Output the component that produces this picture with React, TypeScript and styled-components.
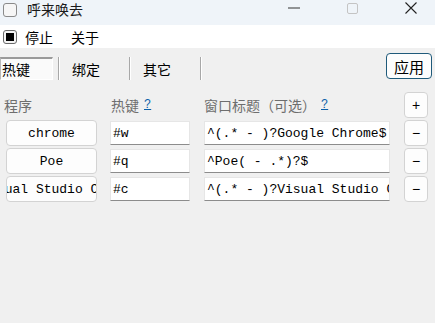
import React from "react";
import styled, { createGlobalStyle } from "styled-components";

const Global = createGlobalStyle`
  html, body { margin: 0; padding: 0; }
  body {
    width: 435px; height: 323px; overflow: hidden;
    background: #f0f0f0;
    font-family: "Noto Sans CJK SC", "Noto Sans", sans-serif;
    font-size: 14px; color: #000;
  }
`;

const Win = styled.div`
  width: 435px; height: 323px; display: flex; flex-direction: column; background: #f0f0f0;
`;

const TitleBar = styled.div`
  height: 25px; background: #eff4f9; display: flex; align-items: flex-start; padding-left: 3px;
  box-sizing: border-box;
`;
const AppIcon = styled.div`
  width: 12px; height: 12px; border: 1px solid #8a8a8a; border-radius: 3px; background: #f6f6f6;
  margin-top: 3px;
`;
const Title = styled.span`
  margin-left: 10px; font-size: 14px; line-height: 1; margin-top: 2px; color: #1a1a1a;
`;
const Controls = styled.div`
  margin-left: auto; display: flex; align-items: flex-start; height: 100%;
`;
const CtrlBtn = styled.div<{ $w: number }>`
  width: ${p => p.$w}px; height: 16px; display: flex; align-items: center; justify-content: center;
`;

const MenuBar = styled.div`
  height: 23px; background: #fff; display: flex; align-items: center; padding-left: 3px;
`;
const StopIcon = styled.div`
  width: 12px; height: 12px; border: 1px solid #6a6a6a; border-radius: 3px; background: #f4f4f4;
  display: flex; align-items: center; justify-content: center;
  &::after { content: ""; width: 8px; height: 8px; background: #000; }
`;
const MenuItem = styled.span<{ $ml: number }>`
  margin-left: ${p => p.$ml}px; font-size: 14px; line-height: 1;
`;

const Toolbar = styled.div`
  height: 41px; display: flex; align-items: flex-start; padding-top: 5px; box-sizing: border-box;
`;
const Tabs = styled.div`
  display: flex; align-items: center; margin-top: 4px; height: 23px;
`;
const Tab = styled.div<{ $w: number; $active?: boolean }>`
  width: ${p => p.$w}px; height: 23px; box-sizing: border-box; display: flex; align-items: center;
  font-size: 14px; line-height: 1;
  ${p => p.$active ? `
    background: #fafafa;
    border-top: 2px solid #9a9a9a; border-left: 1px solid #b8b8b8;
    border-right: 1px solid #ffffff; border-bottom: 1px solid #ffffff;
    padding-left: 1px;
  ` : `padding-left: 12px;`}
`;
const Gap = styled.div<{ $w: number }>`
  width: ${p => p.$w}px;
`;
const Sep = styled.div`
  width: 1px; height: 23px; background: #a8a8a8; border-right: 1px solid #fff;
`;
const ApplyBtn = styled.button`
  margin-left: auto; margin-right: 3px; width: 46px; height: 26px; box-sizing: border-box;
  border: 1px solid #1f5a7a; border-radius: 4px; background: #fdfdfd;
  font-family: inherit; font-size: 15px; padding: 0; color: #000; line-height: 1;
`;

const Table = styled.div`
  display: grid; grid-template-columns: 91px 93px 200px 40px;
  grid-auto-rows: 26px; row-gap: 2px; padding-left: 6px; padding-top: 3px;
`;
const Cell = styled.div<{ $pl?: number }>`
  padding-left: ${p => p.$pl ?? 0}px; display: flex; align-items: center; min-width: 0;
`;
const Label = styled.span<{ $dx?: number }>`
  color: #6e6e6e; font-size: 14px; line-height: 1; margin-left: ${p => p.$dx ?? 0}px; white-space: nowrap;
`;
const Help = styled.span`
  color: #0b5fa8; text-decoration: underline; font-family: "Liberation Mono", monospace;
  font-size: 12px; margin-left: 5px;
`;
const ProgBtn = styled.div`
  width: 91px; height: 26px; box-sizing: border-box; background: #fdfdfd;
  border: 1px solid #d3d3d3; border-radius: 4px; overflow: hidden;
  display: flex; align-items: center; justify-content: center;
  font-family: "Liberation Mono", monospace; font-size: 13px; white-space: nowrap;
`;
const Input = styled.div<{ $w: number }>`
  width: ${p => p.$w}px; height: 24px; box-sizing: border-box; background: #fff;
  border: 1px solid #e6e6e6; border-bottom: 1px solid #8c8c8c; overflow: hidden;
  display: flex; align-items: center; padding-left: 2px;
  font-family: "Liberation Mono", monospace; font-size: 13px; white-space: nowrap;
`;
const SmallBtn = styled.div`
  width: 24px; height: 26px; box-sizing: border-box; background: #fdfdfd;
  border: 1px solid #d3d3d3; border-radius: 4px;
  display: flex; align-items: center; justify-content: center;
  font-family: "Liberation Sans", sans-serif; font-size: 14px; line-height: 1;
`;

const rows = [
  { prog: "chrome", key: "#w", title: "^(.* - )?Google Chrome$" },
  { prog: "Poe", key: "#q", title: "^Poe( - .*)?$" },
  { prog: "Visual Studio Code", key: "#c", title: "^(.* - )?Visual Studio Code$" },
];

export default function App() {
  return (
    <Win>
      <Global />
      <TitleBar>
        <AppIcon />
        <Title>呼来唤去</Title>
        <Controls>
          <CtrlBtn $w={46}>
            <svg width="12" height="2"><rect width="12" height="1" y="0.5" fill="#333" /></svg>
          </CtrlBtn>
          <CtrlBtn $w={70}>
            <svg width="11" height="11"><rect x="0.5" y="0.5" width="10" height="10" rx="1.5" fill="none" stroke="#c4c4c4" /></svg>
          </CtrlBtn>
          <CtrlBtn $w={48}>
            <svg width="12" height="12"><path d="M0.5 0.5 L11.5 11.5 M11.5 0.5 L0.5 11.5" stroke="#222" strokeWidth="1.1" /></svg>
          </CtrlBtn>
        </Controls>
      </TitleBar>
      <MenuBar>
        <StopIcon />
        <MenuItem $ml={8}>停止</MenuItem>
        <MenuItem $ml={18}>关于</MenuItem>
      </MenuBar>
      <Toolbar>
        <Tabs>
          <Tab $w={53} $active>热键</Tab>
          <Gap $w={5} />
          <Sep />
          <Tab $w={69}>绑定</Tab>
          <Sep />
          <Tab $w={69}>其它</Tab>
          <Sep />
        </Tabs>
        <ApplyBtn>应用</ApplyBtn>
      </Toolbar>
      <Table>
        <Cell><Label $dx={-2}>程序</Label></Cell>
        <Cell $pl={13}><Label $dx={1}>热键</Label><Help>?</Help></Cell>
        <Cell $pl={14}><Label>窗口标题（可选）</Label><Help>?</Help></Cell>
        <Cell $pl={14}><SmallBtn>+</SmallBtn></Cell>
        {rows.map(r => (
          <React.Fragment key={r.prog}>
            <Cell><ProgBtn>{r.prog}</ProgBtn></Cell>
            <Cell $pl={13}><Input $w={80}>{r.key}</Input></Cell>
            <Cell $pl={14}><Input $w={186}>{r.title}</Input></Cell>
            <Cell $pl={14}><SmallBtn>−</SmallBtn></Cell>
          </React.Fragment>
        ))}
      </Table>
    </Win>
  );
}
